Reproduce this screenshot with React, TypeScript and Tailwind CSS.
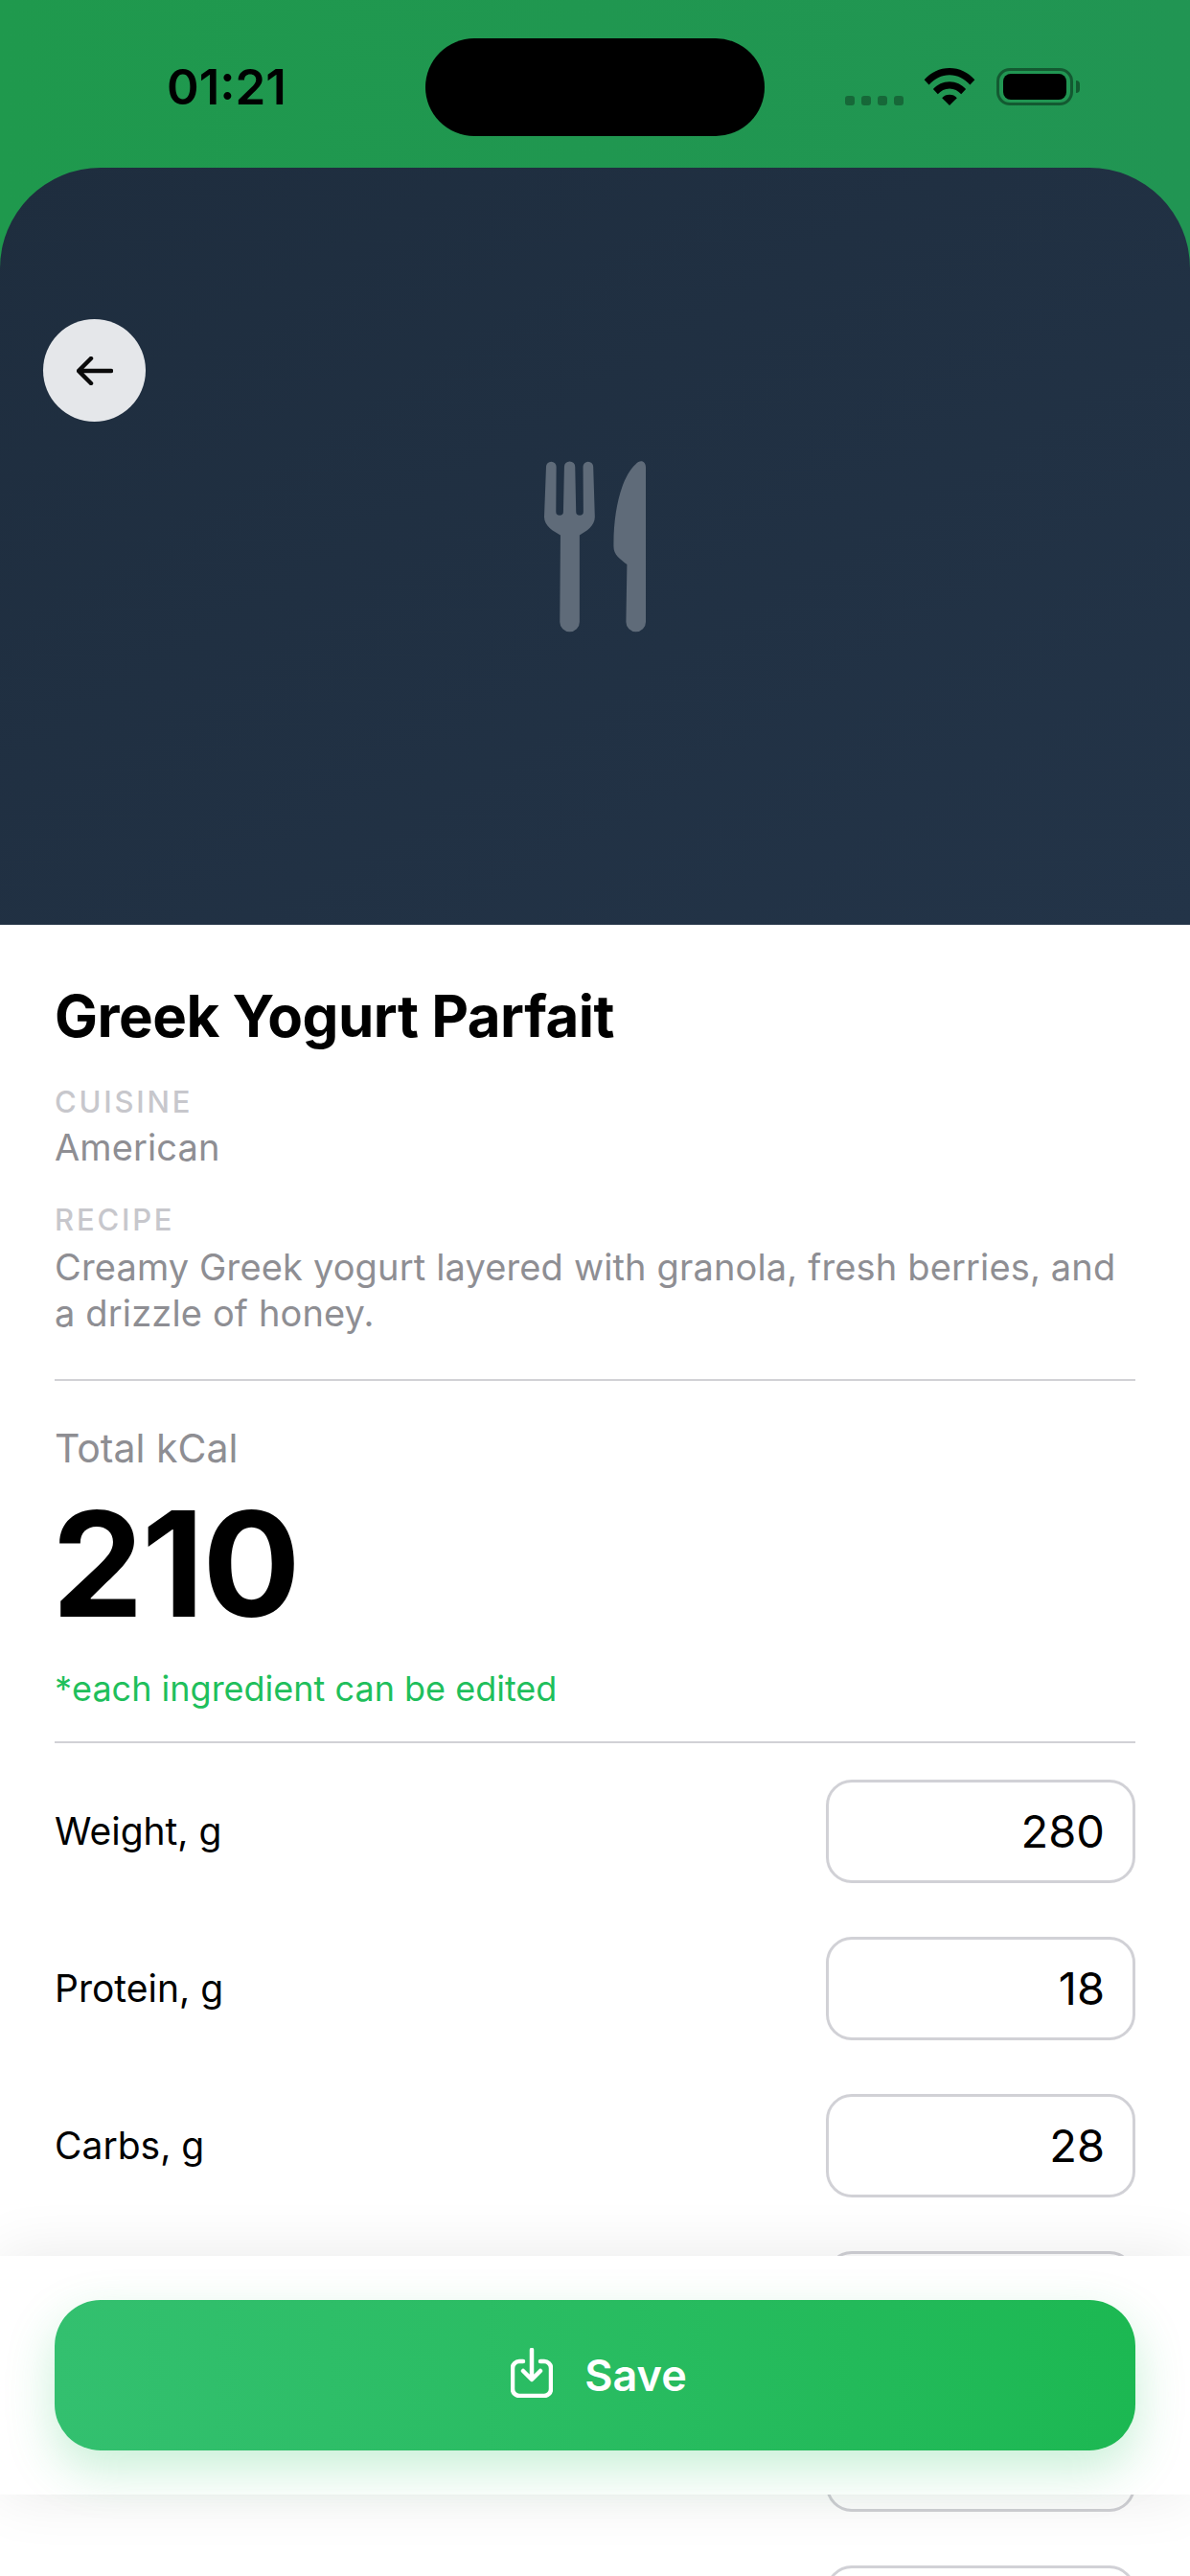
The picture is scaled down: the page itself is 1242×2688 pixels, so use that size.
const rows: [string, string][] = [
  ["Weight, g", "280"],
  ["Protein, g", "18"],
  ["Carbs, g", "28"],
  ["", ""],
  ["", ""],
  ["", ""],
];

export default function App() {
  return (
    <div className="relative h-[2688px] w-[1242px] overflow-hidden bg-white font-['Inter',sans-serif] text-black">
      <div className="bg-gradient-to-r from-[#1f994d] to-[#219553]">
        <div className="relative flex h-[175px] items-start">
          <span className="mt-[62px] ml-[174px] w-[125px] text-[51px] leading-[58px] font-semibold">01:21</span>
          <div className="ml-[145px] mt-[40px] h-[102px] w-[354px] rounded-full bg-black" />
          <div className="ml-[84px] mt-[71px] flex items-start">
            <div className="mt-[29px] flex gap-[7px]">
              <div className="h-[10px] w-[10px] rounded-[3px] bg-black/30" />
              <div className="h-[10px] w-[10px] rounded-[3px] bg-black/30" />
              <div className="h-[10px] w-[10px] rounded-[3px] bg-black/30" />
              <div className="h-[10px] w-[10px] rounded-[3px] bg-black/30" />
            </div>
            <svg className="ml-[21px] h-[39px] w-[54px]" viewBox="0 0 54 40">
              <path d="M0 12.5C7 4.5 16.5 0 27 0s20 4.5 27 12.5l-5 5.5C43 11.3 35.500 7.500 27 7.500S11 11.300 5 18z" />
              <path d="M9.500 22.500C14 17.500 20 14.500 27 14.500s13 3 17.500 8l-5 5.500C36.300 24.300 32 22 27 22s-9.300 2.300-12.500 6z" />
              <path d="M19 32c2-2.300 4.800-3.500 8-3.500s6 1.200 8 3.500l-8 8z" />
            </svg>
            <div className="ml-[22px] flex items-center">
              <div className="h-[39px] w-[80px] rounded-[14px] border-[3px] border-black/40 px-[4px] py-[3px]">
                <div className="h-full w-full rounded-[8px] bg-black" />
              </div>
              <div className="ml-[3px] h-[13px] w-[4px] rounded-r-full bg-black/40" />
            </div>
          </div>
        </div>
        <div className="relative flex h-[790px] items-center justify-center rounded-t-[105px] bg-gradient-to-br from-[#1e2d3e] to-[#233448]">
          <button className="absolute top-[158px] left-[45px] flex h-[107px] w-[107px] items-center justify-center rounded-full bg-[#e5e7ea]">
            <svg className="h-[30px] w-[38px]" viewBox="0 0 38 30" fill="none" stroke="#0b0b0b" strokeWidth="4.500" strokeLinecap="round" strokeLinejoin="round">
              <path d="M36 15H3M15 2L2 15L15 28" />
            </svg>
          </button>
          <svg className="h-[182px] w-[108px]" viewBox="200 120 325 545" fill="#5f6b79">
            <path d="M209 143A16 16 0 0 1 241 143L240 284A11 11 0 0 0 263 284L266 143A17 17 0 0 1 300 143L303 284A11 11 0 0 0 326 284L325 143A16 16 0 0 1 357 143L362 300C362 330 335 345 314 358L314 630A31 31 0 0 1 252 630L254 358C232 345 203 330 203 300Z" />
            <path d="M522 145L522 630A31 31 0 0 1 460 630L463 450C440 430 420 420 421 390C420 270 450 170 490 135C505 118 522 125 522 145Z" />
          </svg>
        </div>
      </div>

      <div className="px-[57px] pt-[59px]">
        <h1 className="text-[60px] leading-[72px] font-bold tracking-[-0.5px]">Greek Yogurt Parfait</h1>
        <div className="mt-[36px] text-[31px] leading-[36px] font-medium tracking-[2.8px] text-[#c7c7cc]">CUISINE</div>
        <div className="mt-[5px] text-[38px] leading-[48px] tracking-[0.1px] text-[#8e8e93]">American</div>
        <div className="mt-[34px] text-[31px] leading-[36px] font-medium tracking-[2.8px] text-[#c7c7cc]">RECIPE</div>
        <p className="mt-[7px] text-[38px] leading-[48px] tracking-[0.15px] text-[#8e8e93]">Creamy Greek yogurt layered with granola, fresh berries, and a drizzle of honey.</p>
        <div className="mt-[45px] h-[2px] bg-[#d1d1d6]" />
        <div className="mt-[46px] text-[41px] leading-[48px] text-[#8e8e93]">Total kCal</div>
        <div className="mt-[12px] ml-[-3px] text-[152px] leading-[170px] font-bold tracking-[-2px]">210</div>
        <div className="mt-[23px] text-[36px] leading-[44px] text-[#1fbf5c]">*each ingredient can be edited</div>
        <div className="mt-[33px] h-[2px] bg-[#d1d1d6]" />
        <div className="mt-[38px] flex flex-col gap-[56px]">
          {rows.map(([label, value], i) => (
            <div key={i} className="flex items-center justify-between">
              <span className="text-[39px] leading-[46px]">{label}</span>
              <div className="flex h-[108px] w-[323px] items-center justify-end rounded-[27px] border-[3px] border-[#d1d1d6] bg-white pr-[29px] text-[47px]">{value}</div>
            </div>
          ))}
        </div>
      </div>

      <div className="absolute inset-x-0 bottom-[85px] h-[249px] bg-white px-[57px] pt-[46px] shadow-[0_0_60px_rgba(0,0,0,0.09)]">
        <button className="flex h-[157px] w-full items-center justify-center gap-[33px] rounded-[48px] bg-gradient-to-r from-[#33c06f] to-[#1cb852] pl-[8px] text-white shadow-[0_20px_50px_rgba(34,197,94,0.25)]">
          <svg className="mt-[-6px] h-[52px] w-[44px]" viewBox="0 0 44 52" fill="none" stroke="white" strokeWidth="4.500" strokeLinecap="round" strokeLinejoin="round">
            <path d="M13 14H9a7 7 0 0 0-7 7v22a7 7 0 0 0 7 7h26a7 7 0 0 0 7-7V21a7 7 0 0 0-7-7h-4" />
            <path d="M22 2v30M13 24l9 9 9-9" />
          </svg>
          <span className="text-[45px] leading-[54px] font-semibold">Save</span>
        </button>
      </div>
    </div>
  );
}
